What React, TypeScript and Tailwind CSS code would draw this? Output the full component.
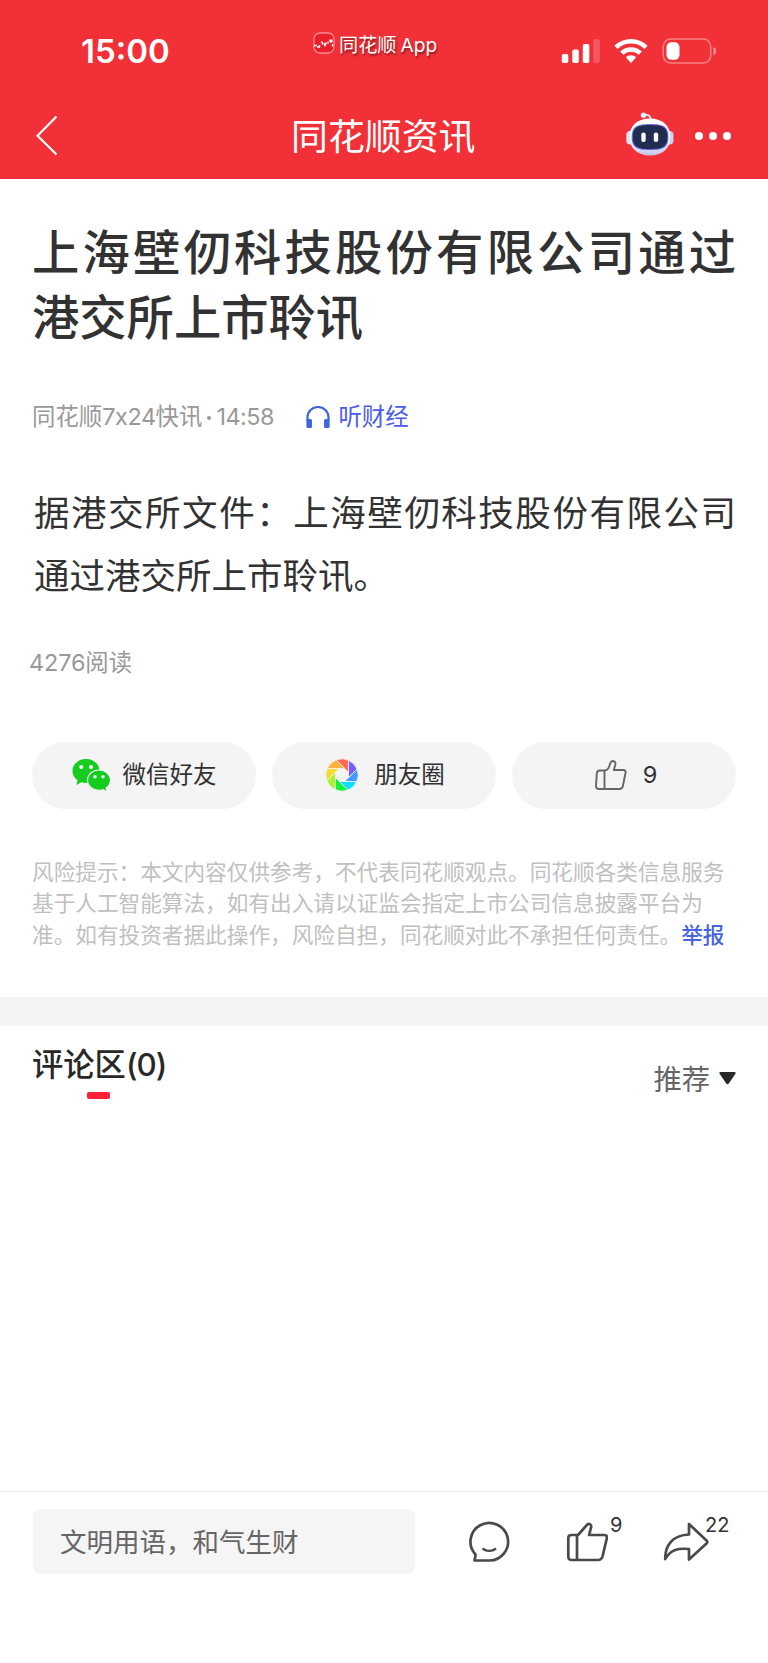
import type { ReactNode } from "react"

// Each blade of the "moments" shutter is the same wedge, rotated by 45deg
const BLADES = ["#ff6a4d", "#7a5cff", "#3f9bff", "#12dcff", "#12f23c", "#a6f52a", "#f6dc32", "#ffb13d"]

export default function App() {
  return (
    <div className="flex h-[1663px] w-[768px] flex-col overflow-hidden bg-white font-['Inter','Noto_Sans_CJK_SC',sans-serif] text-[#323232]">
      <header className="h-[179px] shrink-0 bg-[#f23037] text-white">
        <StatusBar />
        <NavBar />
      </header>
      <Article />
      <div className="h-[29px] shrink-0 bg-[#f4f4f4]" />
      <Comments />
      <BottomBar />
    </div>
  )
}

function StatusBar() {
  return (
    <div className="flex h-[92px]">
      <div className="w-[313px] pt-[31px] pl-[81px] text-[33px] leading-[40px] font-semibold">15:00</div>
      <div className="mt-[30px] flex h-[26px] w-[248px] items-center gap-[4px]">
        <AppBadge />
        <span className="pt-[3px] text-[19.2px] leading-[26px] whitespace-nowrap [text-shadow:1px_2px_2px_rgba(0,0,0,0.45)]">
          同花顺<span className="ml-[4px]">App</span>
        </span>
      </div>
      <div className="flex pt-[38px]">
        <SignalIcon />
        <WifiIcon />
        <BatteryIcon />
      </div>
    </div>
  )
}

function NavBar() {
  return (
    <div className="flex h-[87px] pl-[36px]">
      <svg className="mt-[23px] h-[42px] w-[22px]" viewBox="0 0 22 42" fill="none" stroke="#fff" strokeWidth="2.200">
        <path d="M20.500 1.500 1.500 20.700 20.500 39.500" />
      </svg>
      <h1 className="ml-[233px] w-[335px] pt-[19px] text-[36.9px] leading-[52px]">同花顺资讯</h1>
      <RobotIcon />
      <div className="mt-[40px] ml-[21px] flex gap-[6px]">
        <i className="size-[8px] rounded-full bg-white" />
        <i className="size-[8px] rounded-full bg-white" />
        <i className="size-[8px] rounded-full bg-white" />
      </div>
    </div>
  )
}

function Article() {
  return (
    <main className="h-[818px] shrink-0 px-[32px]">
      <h2 className="mt-[41px] text-justify text-[47.3px] leading-[65px] font-medium">
        上海壁仞科技股份有限公司通过港交所上市聆讯
      </h2>

      <div className="mt-[49px] flex h-[36px] items-center text-[23.4px] leading-[36px] text-[#999]">
        <span>
          同花顺<span className="tracking-[-0.4px]">7x24</span>快讯
        </span>
        <span className="mx-[5px] mt-[2px] size-[4px] rounded-full bg-[#999]" />
        <span className="w-[59px] tracking-[-0.5px]">14:58</span>
        <svg className="mr-[8px] ml-[31px] h-[22px] w-[24px]" viewBox="0 0 24 22" fill="none">
          <path d="M1.500 15v-3.500a10.500 10.500 0 0 1 21 0V15" stroke="#3d66dc" strokeWidth="2.200" />
          <rect x=".4" y="13" width="5.600" height="9" rx="1.500" fill="#3d66dc" />
          <rect x="18" y="13" width="5.600" height="9" rx="1.500" fill="#3d66dc" />
        </svg>
        <span className="text-[#4a5cf0]">听财经</span>
      </div>

      <p className="mt-[47px] ml-[2px] text-justify text-[35.5px] leading-[63px]">
        据港交所文件：上海壁仞科技股份有限公司通过港交所上市聆讯。
      </p>

      <div className="mt-[37px] -ml-[3px] text-[23.4px] leading-[36px] text-[#999]">
        <span className="tracking-[-0.1px]">4276</span>阅读
      </div>

      <div className="mt-[61px] flex gap-[16px]">
        <PillButton>
          <WechatIcon />
          <span className="ml-[12px]">微信好友</span>
        </PillButton>
        <PillButton>
          <MomentsIcon />
          <span className="ml-[15px]">朋友圈</span>
        </PillButton>
        <PillButton>
          <svg className="ml-[4px] h-[31px] w-[32px]" viewBox="0 0 32 31" fill="none" stroke="#666" strokeWidth="1.900" strokeLinejoin="round">
            <path d="M9.500 10.500c3 0 4.200-2 5-5 .8-2.900 1.400-4.500 3.200-4.500 2.200 0 3.200 1.700 2.600 3.700L18.800 10H28c2.200 0 3 1.200 2.500 3l-2.600 13c-.5 2-1.500 3-3.500 3H4c-2 0-3-1-3-3l.8-12.500c.1-2 1-3 3-3h4.700V29" />
          </svg>
          <span className="ml-[16px]">9</span>
        </PillButton>
      </div>

      <p className="mt-[48px] text-[21.65px] leading-[31.4px] whitespace-nowrap text-[#c0c0c0]">
        风险提示：本文内容仅供参考，不代表同花顺观点。同花顺各类信息服务
        <br />
        基于人工智能算法，如有出入请以证监会指定上市公司信息披露平台为
        <br />
        准。如有投资者据此操作，风险自担，同花顺对此不承担任何责任。
        <a className="font-medium text-[#4664e0]">举报</a>
      </p>
    </main>
  )
}

function PillButton({ children }: { children: ReactNode }) {
  return (
    <button className="flex h-[67px] w-[224px] items-center justify-center rounded-full bg-[#f4f4f4] pb-[1px] text-[23.5px]">
      {children}
    </button>
  )
}

function Comments() {
  return (
    <section className="flex grow justify-between px-[32px]">
      <div className="pt-[16px]">
        <h3 className="text-[31.3px] leading-[46px] font-medium text-[#282828]">
          评论区<span className="tracking-[-0.9px]">(0)</span>
        </h3>
        <div className="mt-[4px] ml-[55px] h-[7px] w-[23px] rounded-[2px] bg-[#ff2138]" />
      </div>
      <div className="mt-[34px] flex h-[40px] items-center text-[28.3px] leading-[40px] text-[#666]">
        推荐
        <svg className="mt-[-3px] ml-[9px] h-[13px] w-[17px]" viewBox="0 0 17 13" fill="#282828">
          <path d="M1.500 0h14c1 0 1.500 1 .9 1.800l-6.600 9.800c-.7 1-1.900 1-2.600 0L.6 1.800C0 1 .5 0 1.500 0Z" />
        </svg>
      </div>
    </section>
  )
}

function BottomBar() {
  return (
    <footer className="flex h-[172px] shrink-0 border-t border-[#ececec] pt-[17px] pl-[33px]">
      <div className="h-[65px] w-[382px] rounded-[8px] bg-[#f5f5f5] pt-[1px] pl-[27px] text-[26.5px] leading-[65px] text-[#666]">
        文明用语，和气生财
      </div>
      <svg className="mt-[12px] ml-[53px] h-[42px] w-[42px]" viewBox="0 0 42 42" fill="none" stroke="#4a4a4a" strokeWidth="2.700" strokeLinejoin="round">
        <path d="M7.500 33.500A18.800 18.800 0 1 1 21.500 39.500H6.500c.2-1.500 1-3 1-6Z" />
        <path d="M14.500 27.500c4 3 9.500 3 13.500 0" />
      </svg>
      <div className="relative mt-[12px] ml-[56px]">
        <svg className="h-[42px] w-[42px]" viewBox="-.5 -.5 42 42" fill="none" stroke="#4a4a4a" strokeWidth="2.700" strokeLinejoin="round">
          <path d="M10.500 13.500h1L20.500 3.300c1.800-1.800 4.500-.6 4.200 2L22.600 13.500h15.200c2 0 3 1.200 2.600 3l-4.400 18.500c-.7 2.500-2 3.500-4.500 3.500H5c-2 0-3.200-1.200-3.200-3.200V16.500c0-2 1-3 3-3h5.700v25" />
        </svg>
        <span className="absolute top-[-8px] left-[44px] text-[20px] leading-[24px]">9</span>
      </div>
      <div className="relative mt-[12px] ml-[55px]">
        <svg className="h-[42px] w-[46px]" viewBox="0 -.5 46 42" fill="none" stroke="#4a4a4a" strokeWidth="2.700" strokeLinejoin="round">
          <path d="M26 2.500 43.500 19c1 1 1 2 0 3L26 38V27.500C15 26.500 8 28 2.200 37.500 2 24 9.500 13.500 26 13Z" />
        </svg>
        <span className="absolute top-[-8px] left-[42px] text-[20px] leading-[24px]">22</span>
      </div>
    </footer>
  )
}

function AppBadge() {
  return (
    <svg className="h-[22px] w-[22px]" viewBox="0 0 22 22" fill="none">
      <rect x="1" y="1" width="20" height="20" rx="6" fill="#ea1f29" stroke="#fff" strokeOpacity=".45" strokeWidth="1.300" />
      <path d="M1 13.500h3M4 15h2.500V13M8 9.500l1.500 1v2M11 11l1 2.500 1.500-3M15 9.500v2M19.500 12v2.500" stroke="#fff" strokeWidth="1.400" />
      <path d="M16.500 7.500h3v3h-3z" fill="#fff" />
    </svg>
  )
}

function SignalIcon() {
  return (
    <svg className="h-[26px] w-[53px]" viewBox="0 0 53 26" fill="#fff">
      <rect x=".8" y="16" width="6.500" height="9" rx="1.800" />
      <rect x="11.300" y="11.500" width="6.500" height="13.500" rx="1.800" />
      <rect x="21.800" y="6" width="6.500" height="19" rx="1.800" />
      <rect x="32.300" y="1" width="6.500" height="24" rx="1.800" opacity=".2" />
    </svg>
  )
}

function WifiIcon() {
  return (
    <svg className="h-[26px] w-[34px]" viewBox="0 0 34 26" fill="none" stroke="#fff" strokeWidth="4.600">
      <path d="M2 9.300C10.500 1.200 23.500 1.200 32 9.300" />
      <path d="M7.700 15.200c5.300-5 13.300-5 18.600 0" />
      <path d="M11.800 19.300c3-2.700 7.400-2.700 10.400 0L17 25Z" fill="#fff" stroke="none" />
    </svg>
  )
}

function BatteryIcon() {
  return (
    <svg className="ml-[14px] h-[26px] w-[55px]" viewBox="0 0 55 26" fill="none">
      <rect x="1.200" y="1" width="47.500" height="24" rx="7.500" stroke="#fff" strokeOpacity=".4" strokeWidth="1.600" />
      <path d="M51.500 9c3.500 1.200 3.500 7 0 8.200Z" fill="#fff" fillOpacity=".45" />
      <rect x="4.500" y="4.300" width="13" height="17.500" rx="4.800" fill="#fff" />
    </svg>
  )
}

function RobotIcon() {
  return (
    <svg className="mt-[20px] h-[46px] w-[48px]" viewBox="0 0 48 46" fill="none">
      <defs>
        <linearGradient id="shell" x1="24" y1="7" x2="24" y2="45" gradientUnits="userSpaceOnUse">
          <stop stopColor="#fff" />
          <stop offset=".7" stopColor="#e9ebf8" />
          <stop offset="1" stopColor="#b9bfe2" />
        </linearGradient>
        <linearGradient id="visor" x1="6" y1="14" x2="42" y2="38" gradientUnits="userSpaceOnUse">
          <stop stopColor="#4ba3e8" />
          <stop offset=".5" stopColor="#8350df" />
          <stop offset="1" stopColor="#4d6be8" />
        </linearGradient>
      </defs>
      <path d="M18 3.500c4-1.500 6.500 0 7 5" stroke="#e6e8fa" strokeWidth="1.800" />
      <circle cx="17.500" cy="3.300" r="2.700" fill="#eef0ff" />
      <rect x=".3" y="19" width="9" height="13.500" rx="4" fill="#dde1f4" />
      <rect x="38.500" y="19" width="9" height="13.500" rx="4" fill="#ccd2ef" />
      <path d="M24 6.500c13 0 20.500 8 20.500 18.500S37 43.500 24 43.500 3.300 35.500 3.300 25 11 6.500 24 6.500Z" fill="url(#shell)" />
      <path d="M24 12c14 0 18.300 3 18.300 13S38 38 24 38 5.700 35 5.700 25 10 12 24 12Z" fill="url(#visor)" />
      <path d="M24 13c13.500 0 17.300 2.800 17.300 12S37.500 37 24 37 6.700 34.200 6.700 25 10.500 13 24 13Z" fill="#202c50" />
      <rect x="15.300" y="20.500" width="4.400" height="9.500" rx="2" fill="#fff" />
      <rect x="27.800" y="20.500" width="4.400" height="9.500" rx="2" fill="#fff" />
    </svg>
  )
}

function WechatIcon() {
  return (
    <svg className="h-[34px] w-[39px]" viewBox="0 0 39 34">
      <path d="M14 1c7.500 0 13.500 5.200 13.500 12S21.500 25 14 25c-1.700 0-3.200-.2-4.600-.7L4.500 27l1-4.700C2.500 20.100.5 16.800.5 13 .5 6.200 6.500 1 14 1Z" fill="#14cd1e" />
      <path d="M27 12c6.400 0 11.500 4.500 11.500 10.200 0 3.300-1.700 6-4.300 7.900l1 3.800-4.400-2.200c-1.200.4-2.500.6-3.800.6-6.400 0-11.500-4.400-11.500-10.100S20.600 12 27 12Z" fill="#14cd1e" stroke="#f4f4f4" strokeWidth="1.200" />
      <g fill="#fff">
        <circle cx="9.300" cy="9" r="2" />
        <circle cx="19" cy="9" r="2" />
        <circle cx="23" cy="18.800" r="1.700" />
        <circle cx="31" cy="18.800" r="1.700" />
      </g>
    </svg>
  )
}

function MomentsIcon() {
  return (
    <svg className="ml-[2px] h-[34px] w-[34px]" viewBox="-17 -17 34 34">
      {BLADES.map((color, i) => (
        <path
          key={color}
          d="M-5.870 -15.060A16.200 16.200 0 0 1 6.500 -14.840V-2.700Z"
          fill={color}
          stroke="#f4f4f4"
          strokeWidth=".8"
          transform={`rotate(${i * 45})`}
        />
      ))}
    </svg>
  )
}
